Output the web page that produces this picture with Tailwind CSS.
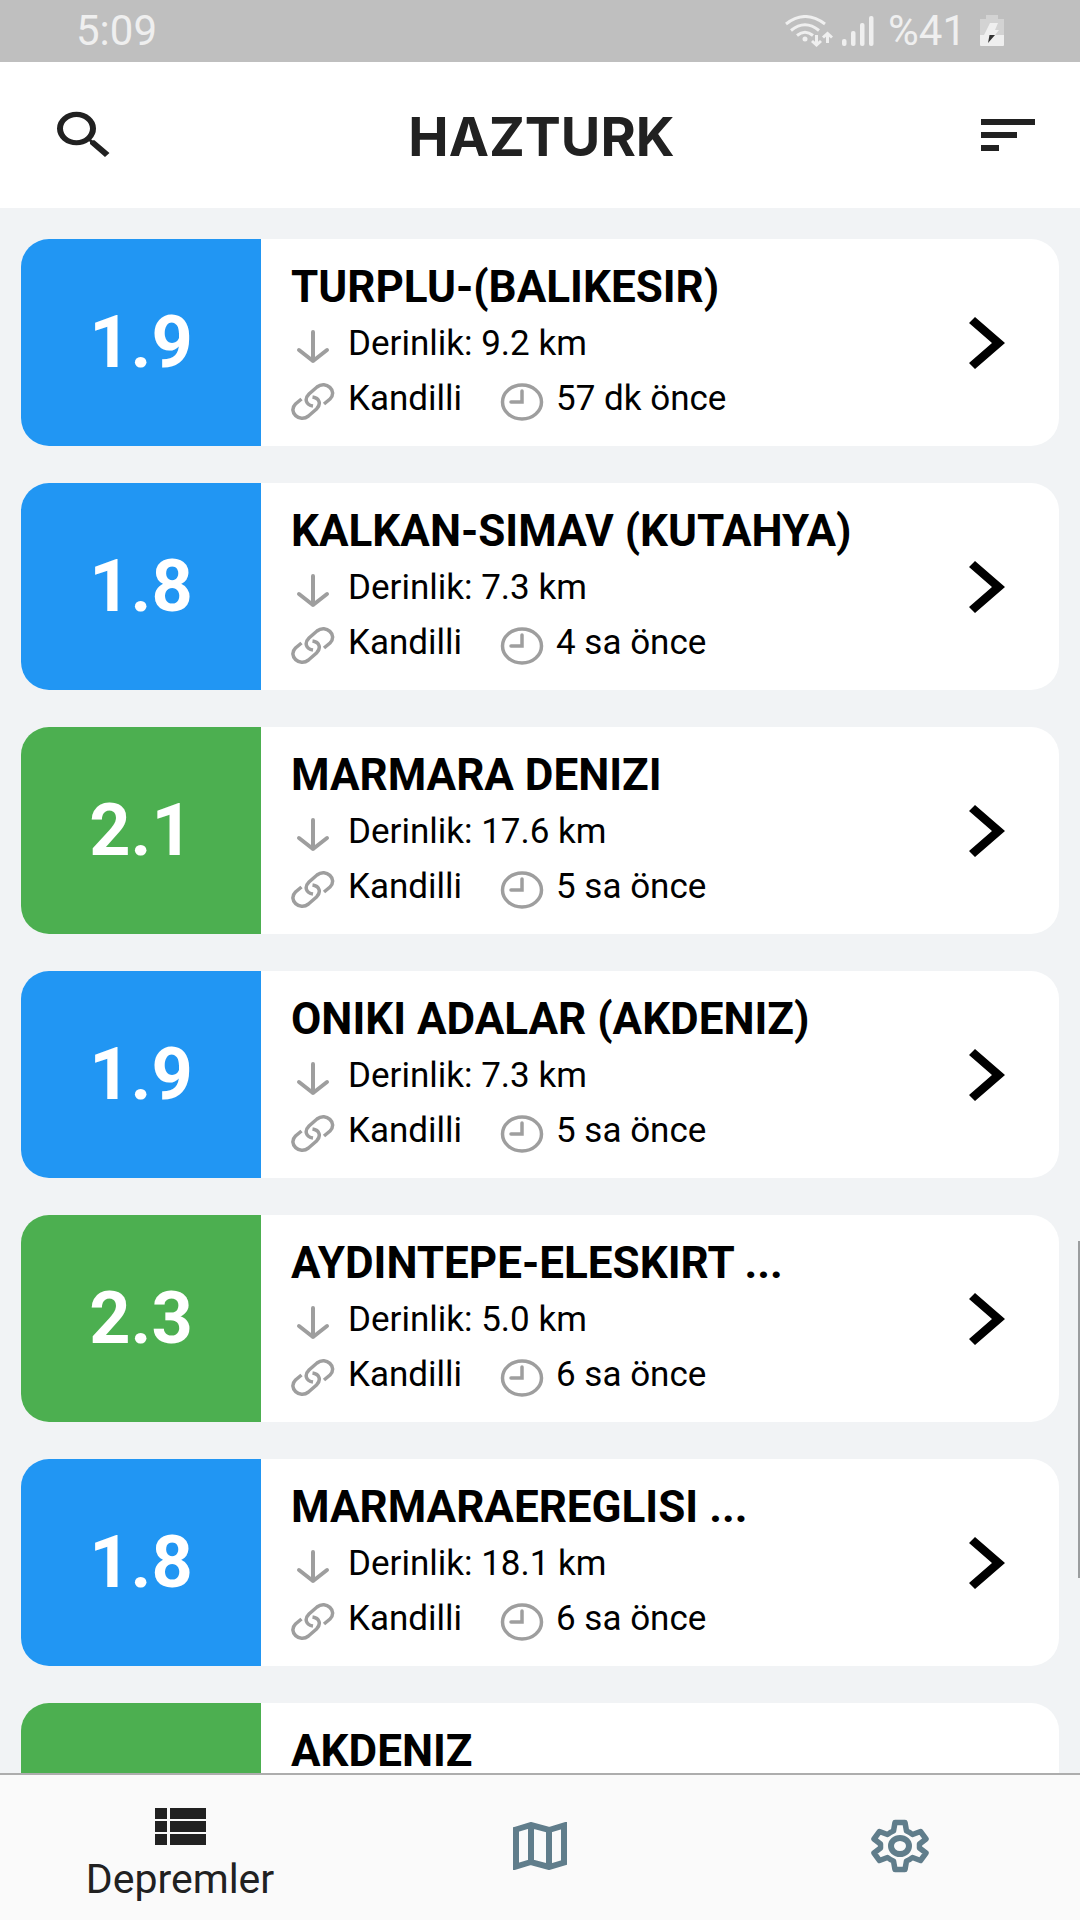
<!DOCTYPE html>
<html lang="tr">
<head>
    <meta charset="UTF-8">
    <meta name="viewport" content="width=device-width, initial-scale=1.0">
    <title>HAZTURK</title>
    <script src="https://cdn.jsdelivr.net/npm/@tailwindcss/browser@4"></script>
</head>
<body class="h-screen flex flex-col overflow-hidden bg-[#f1f3f5] text-black font-['Roboto',sans-serif]">
    <!-- Status bar -->
    <div class="h-[62px] shrink-0 flex items-center justify-between bg-[#bfbfbf] pl-[76px] pr-[76px] text-[42px] leading-none text-[#efefef]">
        <span>5:09</span>
        <div class="flex items-center">
            <svg class="w-12 h-8" viewBox="0 0 48 32" fill="none" stroke="currentColor" stroke-width="3">
                <path d="M1 9Q20-6 40 9M6 15.500Q20 4 34 15.500M12 20.500Q20 14 28 20.500"/>
                <circle cx="20" cy="24" r="2.500" fill="currentColor" stroke="none"/>
                <path d="M31.500 20V29M27 26l4.500 4 4.500-4M42.500 28V19M38 22.500l4.500-4 4.500 4"/>
            </svg>
            <svg class="w-8 h-8 ml-[9px]" viewBox="0 0 32 32" fill="currentColor">
                <rect x="0" y="24" width="4.500" height="7" rx="2"/>
                <rect x="9" y="16" width="4.500" height="15" rx="2"/>
                <rect x="18" y="8" width="4.500" height="23" rx="2"/>
                <rect x="27" y="1" width="4.500" height="30" rx="2"/>
            </svg>
            <span class="ml-[14px]">%41</span>
            <svg class="w-6 h-8 ml-[14px]" viewBox="0 0 24 32">
                <path fill="#d3d3d3" d="M6 0h12v4h6v16H0V4h6z"/>
                <path fill="#efefef" d="M0 20h24v10q0 1-1 1H1q-1 0-1-1z"/>
                <path fill="#efefef" d="M10 8h8l-3 7h4l-4 5H4z"/>
                <path fill="#333" d="M9.500 20H15L8 28z"/>
            </svg>
        </div>
    </div>

    <header class="h-[146px] shrink-0 flex items-center justify-between bg-white pl-12 pr-[45px] text-[#212121]">
        <button type="button" aria-label="Ara" class="w-[72px] h-[62px]">
            <svg class="w-full h-full" viewBox="0 0 24 24" preserveAspectRatio="none" fill="currentColor">
                <path d="M15.500 14h-.79l-.28-.27A6.471 6.471 0 0 0 16 9.500 6.500 6.500 0 1 0 9.500 16c1.610 0 3.090-.59 4.230-1.570l.27.28v.79l5 4.990L20.490 19l-4.990-5zm-6 0C7.010 14 5 11.990 5 9.500S7.010 5 9.500 5 14 7.010 14 9.500 11.990 14 9.500 14z"/>
            </svg>
        </button>
        <h1 class="pt-1 text-[54px] leading-none font-bold font-['Inter',sans-serif]">HAZTURK</h1>
        <button type="button" aria-label="Sırala" class="w-[72px] flex justify-end">
            <svg class="w-[54px] h-8" viewBox="0 0 54 32" fill="currentColor">
                <path d="M0 0h54v6H0zM0 13h36v6H0zM0 26h18v6H0z"/>
            </svg>
        </button>
    </header>

    <main id="quake-list" class="flex-1 min-h-0 overflow-hidden flex flex-col gap-[37px] px-[21px] pt-[31px]"></main>

    <!-- Scroll indicator -->
    <div class="absolute right-0 top-[1241px] w-[2px] h-[337px] bg-[#9b9d9f]"></div>

    <nav class="h-[147px] shrink-0 grid grid-cols-3 border-t-2 border-[#adadad] bg-[#fafafa] text-[#607d8b]">
        <a href="#" aria-current="page" class="flex flex-col items-center pt-[33px] text-[#212121]">
            <svg class="w-[51px] h-[37px]" viewBox="0 0 51 37" fill="currentColor">
                <path d="M0 0h12v11H0zM15 0h36v11H15zM0 13h12v11H0zM15 13h36v11H15zM0 26h12v11H0zM15 26h36v11H15z"/>
            </svg>
            <span class="mt-2 text-[41px] leading-[52px]">Depremler</span>
        </a>
        <a href="#" aria-label="Harita" class="flex items-center justify-center pb-1">
            <svg class="w-[54px] h-12" viewBox="0 0 54 48" fill="none" stroke="currentColor" stroke-width="6">
                <path d="M3 7.500L18 3 36 8 51 3.500V40.500L36 45 18 40 3 44.500zM18 3V40M36 8V45"/>
            </svg>
        </a>
        <a href="#" aria-label="Ayarlar" class="flex items-center justify-center pb-1">
            <svg class="w-[60px] h-[54px]" viewBox="0 0 60 54" fill="none" stroke="currentColor">
                <path stroke-width="5.500" stroke-linejoin="round" d="M25 3.500H35L36.500 12Q39.500 13 42.500 15.500L50.500 12.500 56 20 49.500 25V29L56 34 50.500 41.500 42.500 38.500Q39.500 41 36.500 42L35 50.500H25L23.500 42Q20.500 41 17.500 38.500L9.500 41.500 4 34 10.500 29V25L4 20 9.500 12.500 17.500 15.500Q20.500 13 23.500 12z"/>
                <ellipse cx="30" cy="27" rx="9" ry="8" stroke-width="6"/>
            </svg>
        </a>
    </nav>

    <script>
        const BLUE = 'bg-[#2196f3]';
        const GREEN = 'bg-[#4caf50]';

        const quakes = [
            { mag: "1.9", color: BLUE, place: "TURPLU-(BALIKESIR)", depth: "9.2", time: "57 dk önce" },
            { mag: "1.8", color: BLUE, place: "KALKAN-SIMAV (KUTAHYA)", depth: "7.3", time: "4 sa önce" },
            { mag: "2.1", color: GREEN, place: "MARMARA DENIZI", depth: "17.6", time: "5 sa önce" },
            { mag: "1.9", color: BLUE, place: "ONIKI ADALAR (AKDENIZ)", depth: "7.3", time: "5 sa önce" },
            { mag: "2.3", color: GREEN, place: "AYDINTEPE-ELESKIRT ...", depth: "5.0", time: "6 sa önce" },
            { mag: "1.8", color: BLUE, place: "MARMARAEREGLISI ...", depth: "18.1", time: "6 sa önce" },
            { mag: "", color: GREEN, place: "AKDENIZ" }
        ];

        function createDetails(quake) {
            return `
                <p class="flex items-center">
                    <svg class="w-[44px] h-9 mr-[13px] mt-[6px]" viewBox="0 0 44 36" fill="none" stroke="#9e9e9e" stroke-width="4" stroke-linecap="round" stroke-linejoin="round">
                        <path d="M22 3V32M8 21L22 32 36 21"/>
                    </svg>
                    Derinlik: ${quake.depth} km
                </p>
                <p class="flex items-center">
                    <svg class="w-[44px] h-[38px] mr-[13px] mt-[6px]" viewBox="0 0 44 38" fill="none" stroke="#9e9e9e" stroke-width="3.500">
                        <path d="M33 21L39 16C47 8 35-3 26 4L18 11C13 16 15 22 22 23"/>
                        <path d="M10.500 16L4.500 21C-3.500 29 8.500 40 17.500 33L25.500 26C30.500 21 28.500 15 21.500 14"/>
                    </svg>
                    <span class="w-[152px]">Kandilli</span>
                    <svg class="w-[44px] h-[38px] mr-3 mt-[6px]" viewBox="0 0 44 38" fill="none" stroke="#9e9e9e" stroke-width="3.500">
                        <ellipse cx="22" cy="19" rx="19.500" ry="17"/>
                        <path stroke-linecap="round" d="M22 8V19H11"/>
                    </svg>
                    ${quake.time}
                </p>
            `;
        }

        function createCard(quake) {
            return `
                <a href="#" class="h-[207px] shrink-0 flex rounded-[28px] overflow-hidden bg-white">
                    <div class="w-[240px] shrink-0 flex items-center justify-center text-white text-[72px] font-bold ${quake.color}">${quake.mag}</div>
                    <div class="flex-1 min-w-0 pl-[30px] pt-[22px] text-[35px] leading-[55px]">
                        <h2 class="mb-[3px] text-[44px] leading-[52px] font-bold whitespace-nowrap">${quake.place}</h2>
                        ${quake.depth ? createDetails(quake) : ''}
                    </div>
                    <svg class="w-9 h-[52px] shrink-0 self-center mr-[54px]" viewBox="0 0 36 52" fill="#000">
                        <path d="M0 6L6 0 36 26 6 52 0 46 23 26z"/>
                    </svg>
                </a>
            `;
        }

        document.getElementById('quake-list').innerHTML = quakes.map(createCard).join('');
    </script>
</body>
</html>
